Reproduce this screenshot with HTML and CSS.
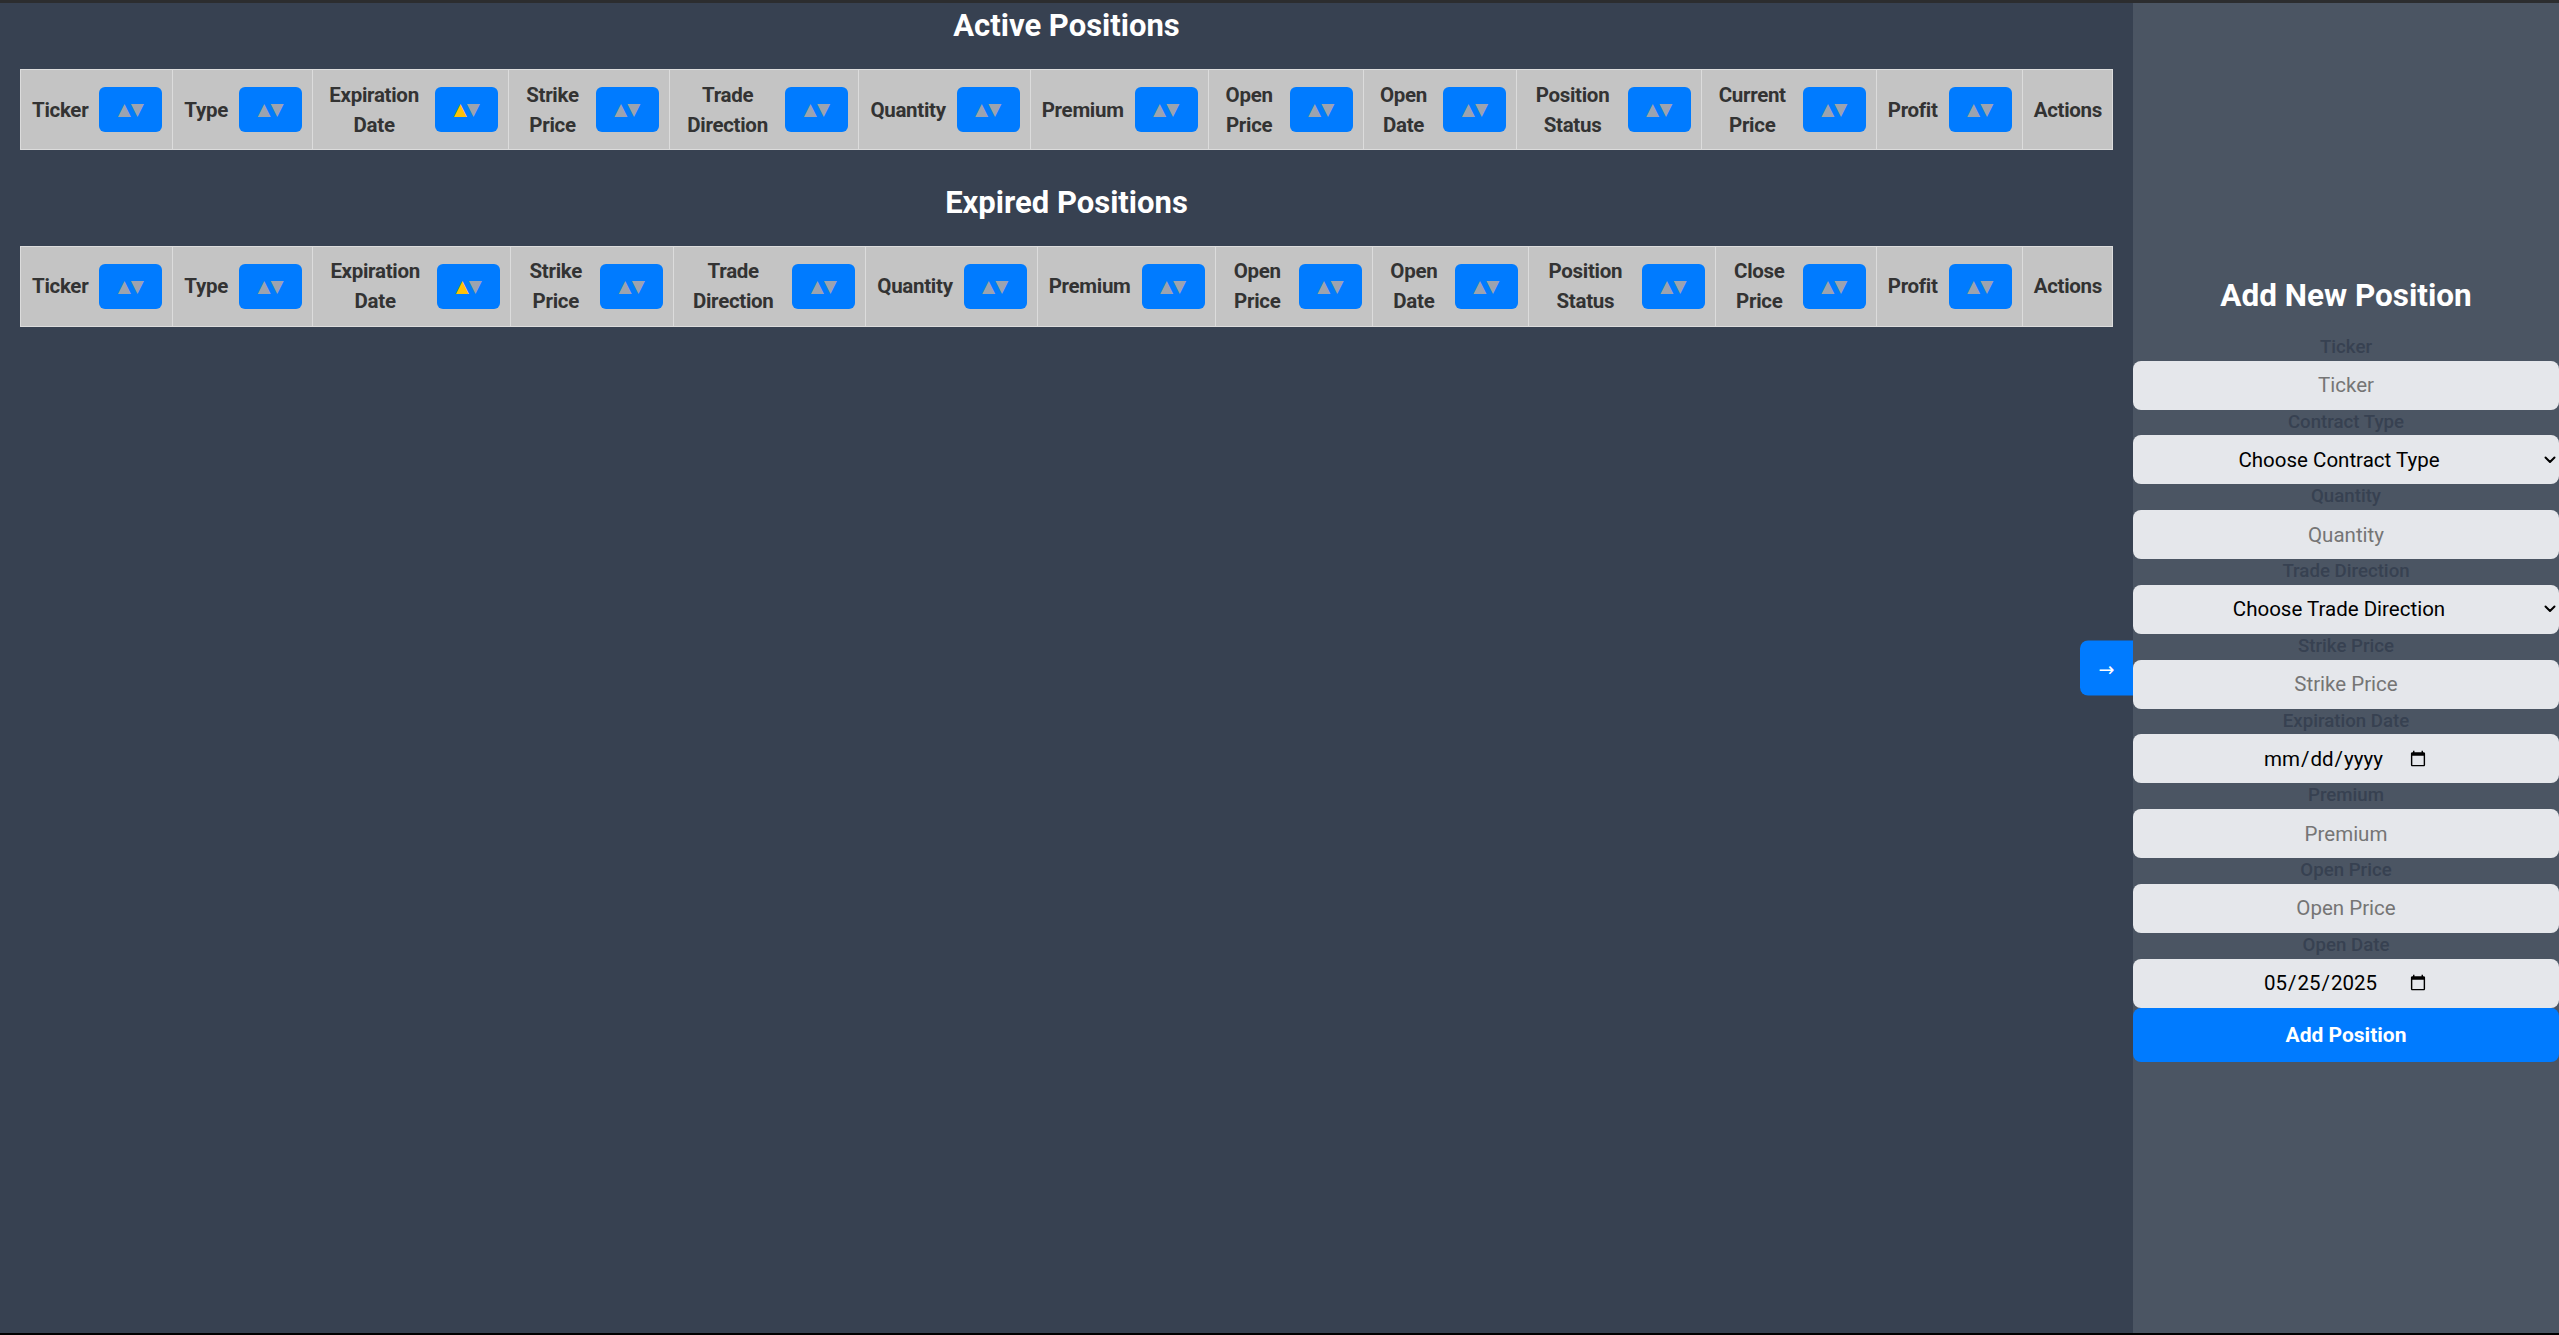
FILE: index.html
```html
<!DOCTYPE html>
<html lang="en">
<head>
<meta charset="utf-8">
<title>Positions</title>
<link rel="stylesheet" href="styles.css">
</head>
<body>
<div class="topbar"></div>
<div class="app">
  <main class="main">
    <h2 class="section-title">Active Positions</h2>
    <table class="positions">
      <thead>
        <tr>
          <th><div class="th-inner"><span class="th-text">Ticker</span><button class="sort-btn"><span class="tri">▲</span><span class="tri">▼</span></button></div></th>
          <th><div class="th-inner"><span class="th-text">Type</span><button class="sort-btn"><span class="tri">▲</span><span class="tri">▼</span></button></div></th>
          <th><div class="th-inner"><span class="th-text">Expiration Date</span><button class="sort-btn"><span class="tri active">▲</span><span class="tri">▼</span></button></div></th>
          <th><div class="th-inner"><span class="th-text">Strike Price</span><button class="sort-btn"><span class="tri">▲</span><span class="tri">▼</span></button></div></th>
          <th><div class="th-inner"><span class="th-text">Trade Direction</span><button class="sort-btn"><span class="tri">▲</span><span class="tri">▼</span></button></div></th>
          <th><div class="th-inner"><span class="th-text">Quantity</span><button class="sort-btn"><span class="tri">▲</span><span class="tri">▼</span></button></div></th>
          <th><div class="th-inner"><span class="th-text">Premium</span><button class="sort-btn"><span class="tri">▲</span><span class="tri">▼</span></button></div></th>
          <th><div class="th-inner"><span class="th-text">Open Price</span><button class="sort-btn"><span class="tri">▲</span><span class="tri">▼</span></button></div></th>
          <th><div class="th-inner"><span class="th-text">Open Date</span><button class="sort-btn"><span class="tri">▲</span><span class="tri">▼</span></button></div></th>
          <th><div class="th-inner"><span class="th-text">Position Status</span><button class="sort-btn"><span class="tri">▲</span><span class="tri">▼</span></button></div></th>
          <th><div class="th-inner"><span class="th-text">Current Price</span><button class="sort-btn"><span class="tri">▲</span><span class="tri">▼</span></button></div></th>
          <th><div class="th-inner"><span class="th-text">Profit</span><button class="sort-btn"><span class="tri">▲</span><span class="tri">▼</span></button></div></th>
          <th class="th-actions">Actions</th>
        </tr>
      </thead>
      <tbody></tbody>
    </table>

    <h2 class="section-title second">Expired Positions</h2>
    <table class="positions">
      <thead>
        <tr>
          <th><div class="th-inner"><span class="th-text">Ticker</span><button class="sort-btn"><span class="tri">▲</span><span class="tri">▼</span></button></div></th>
          <th><div class="th-inner"><span class="th-text">Type</span><button class="sort-btn"><span class="tri">▲</span><span class="tri">▼</span></button></div></th>
          <th><div class="th-inner"><span class="th-text">Expiration Date</span><button class="sort-btn"><span class="tri active">▲</span><span class="tri">▼</span></button></div></th>
          <th><div class="th-inner"><span class="th-text">Strike Price</span><button class="sort-btn"><span class="tri">▲</span><span class="tri">▼</span></button></div></th>
          <th><div class="th-inner"><span class="th-text">Trade Direction</span><button class="sort-btn"><span class="tri">▲</span><span class="tri">▼</span></button></div></th>
          <th><div class="th-inner"><span class="th-text">Quantity</span><button class="sort-btn"><span class="tri">▲</span><span class="tri">▼</span></button></div></th>
          <th><div class="th-inner"><span class="th-text">Premium</span><button class="sort-btn"><span class="tri">▲</span><span class="tri">▼</span></button></div></th>
          <th><div class="th-inner"><span class="th-text">Open Price</span><button class="sort-btn"><span class="tri">▲</span><span class="tri">▼</span></button></div></th>
          <th><div class="th-inner"><span class="th-text">Open Date</span><button class="sort-btn"><span class="tri">▲</span><span class="tri">▼</span></button></div></th>
          <th><div class="th-inner"><span class="th-text">Position Status</span><button class="sort-btn"><span class="tri">▲</span><span class="tri">▼</span></button></div></th>
          <th><div class="th-inner"><span class="th-text">Close Price</span><button class="sort-btn"><span class="tri">▲</span><span class="tri">▼</span></button></div></th>
          <th><div class="th-inner"><span class="th-text">Profit</span><button class="sort-btn"><span class="tri">▲</span><span class="tri">▼</span></button></div></th>
          <th class="th-actions">Actions</th>
        </tr>
      </thead>
      <tbody></tbody>
    </table>
  </main>

  <aside class="panel">
    <button class="toggle-btn">→</button>
    <form class="add-form">
      <h2 class="form-title">Add New Position</h2>
      <label class="field-label" for="f-ticker">Ticker</label>
      <input class="field" id="f-ticker" type="text" placeholder="Ticker">
      <label class="field-label" for="f-type">Contract Type</label>
      <div class="select-wrap">
        <select class="field select" id="f-type">
          <option value="">Choose Contract Type</option>
          <option value="call">Call</option>
          <option value="put">Put</option>
        </select>
        <svg class="chevron" width="12" height="8" viewBox="0 0 12 8" aria-hidden="true"><path d="M1.5 1.5 L6 6 L10.5 1.5" fill="none" stroke="#000" stroke-width="2" stroke-linecap="round" stroke-linejoin="round"/></svg>
      </div>
      <label class="field-label" for="f-qty">Quantity</label>
      <input class="field" id="f-qty" type="number" placeholder="Quantity">
      <label class="field-label" for="f-dir">Trade Direction</label>
      <div class="select-wrap">
        <select class="field select" id="f-dir">
          <option value="">Choose Trade Direction</option>
          <option value="buy">Buy</option>
          <option value="sell">Sell</option>
        </select>
        <svg class="chevron" width="12" height="8" viewBox="0 0 12 8" aria-hidden="true"><path d="M1.5 1.5 L6 6 L10.5 1.5" fill="none" stroke="#000" stroke-width="2" stroke-linecap="round" stroke-linejoin="round"/></svg>
      </div>
      <label class="field-label" for="f-strike">Strike Price</label>
      <input class="field" id="f-strike" type="number" placeholder="Strike Price">
      <label class="field-label" for="f-exp">Expiration Date</label>
      <input class="field date" id="f-exp" type="date">
      <label class="field-label" for="f-prem">Premium</label>
      <input class="field" id="f-prem" type="number" placeholder="Premium">
      <label class="field-label" for="f-open">Open Price</label>
      <input class="field" id="f-open" type="number" placeholder="Open Price">
      <label class="field-label" for="f-odate">Open Date</label>
      <input class="field date" id="f-odate" type="date" value="2025-05-25">
      <button class="submit-btn" type="button">Add Position</button>
    </form>
  </aside>
</div>
<div class="bottombar"></div>
</body>
</html>
```

FILE: styles.css
```css
* { box-sizing: border-box; }

html, body {
  margin: 0;
  padding: 0;
  height: 100%;
}

body {
  display: flex;
  flex-direction: column;
  height: 1335px;
  overflow: hidden;
  background: #374151;
  font-family: Roboto, "Noto Sans", "Liberation Sans", sans-serif;
}

.topbar {
  height: 3px;
  flex: 0 0 3px;
  background: #2c2d2f;
}

.bottombar {
  height: 2px;
  flex: 0 0 2px;
  background: #000;
}

.app {
  flex: 1 1 auto;
  display: grid;
  grid-template-columns: 1fr 426px;
  min-height: 0;
}

.main {
  padding: 2px 20px 0 20px;
  min-width: 0;
}

.section-title {
  margin: 0 0 22px 0;
  color: #fff;
  font-size: 31px;
  font-weight: 700;
  line-height: 42px;
  text-align: center;
}

.section-title.second {
  margin-top: 31.5px;
}

.positions {
  width: 100%;
  border-collapse: collapse;
  background: #c4c4c4;
  border: 1px solid #dedede;
}

.positions th {
  border: 1px solid #dcdcdc;
  padding: 9.5px 10px 9.5px 11px;
  color: #333;
  font-size: 20.5px;
  font-weight: 700;
  letter-spacing: -0.3px;
  line-height: 30px;
  vertical-align: middle;
  text-align: center;
}

.th-inner {
  display: flex;
  align-items: center;
  justify-content: space-between;
  gap: 11px;
}

.th-text {
  flex: 1 1 auto;
  text-align: center;
}

.th-actions {
  white-space: nowrap;
}

.sort-btn {
  flex: 0 0 63px;
  width: 63px;
  height: 45px;
  border: none;
  border-radius: 6px;
  background: #007bff;
  padding: 0;
  display: flex;
  align-items: center;
  justify-content: center;
  font-family: "DejaVu Sans", sans-serif;
  font-size: 17px;
  letter-spacing: 0;
  line-height: 1;
  color: #9ca3af;
}

.tri { display: block; }
.tri.active { color: #ffc107; }

.panel {
  position: relative;
  background: #4b5563;
  display: flex;
  flex-direction: column;
  justify-content: center;
}

.toggle-btn {
  position: absolute;
  right: 100%;
  top: 50%;
  transform: translateY(-50%);
  width: 53px;
  height: 55px;
  border: none;
  border-radius: 8px 0 0 8px;
  background: #007bff;
  color: #fff;
  font-family: "DejaVu Sans", sans-serif;
  font-size: 19px;
  padding: 0;
}

.add-form {
  display: flex;
  flex-direction: column;
  padding-top: 2px;
}

.form-title {
  margin: 0 0 18.5px 0;
  color: #fff;
  font-size: 31.5px;
  font-weight: 700;
  line-height: 40px;
  text-align: center;
}

.field-label {
  display: block;
  color: #374151;
  font-size: 18.67px;
  font-weight: 500;
  line-height: 25.75px;
  text-align: center;
}

.field {
  display: block;
  width: 100%;
  height: 49px;
  flex: 0 0 49px;
  border: none;
  border-radius: 8px;
  background: #e5e7eb;
  color: #000;
  font-family: Roboto, "Noto Sans", sans-serif;
  font-size: 20.5px;
  text-align: center;
  text-align-last: center;
  padding: 0 12px;
  outline: none;
}

.field::placeholder { color: #757575; }

.field::-webkit-outer-spin-button,
.field::-webkit-inner-spin-button {
  -webkit-appearance: none;
  margin: 0;
}

.select-wrap {
  position: relative;
  flex: 0 0 49px;
}

.field.select {
  -webkit-appearance: none;
  appearance: none;
  padding: 0 26px 0 12px;
}

.chevron {
  position: absolute;
  right: 3px;
  top: 50%;
  transform: translateY(-50%);
  pointer-events: none;
}

.field.date {
  text-align: left;
  text-align-last: left;
  padding: 0 132px 0 130px;
}

.field.date::-webkit-calendar-picker-indicator {
  width: 18px;
  height: 18px;
  padding: 0;
  margin: 0;
}

.submit-btn {
  display: block;
  width: 100%;
  height: 54px;
  flex: 0 0 54px;
  border: none;
  border-radius: 8px;
  background: #007bff;
  color: #fff;
  font-family: Roboto, "Noto Sans", sans-serif;
  font-size: 21px;
  font-weight: 700;
}
```
